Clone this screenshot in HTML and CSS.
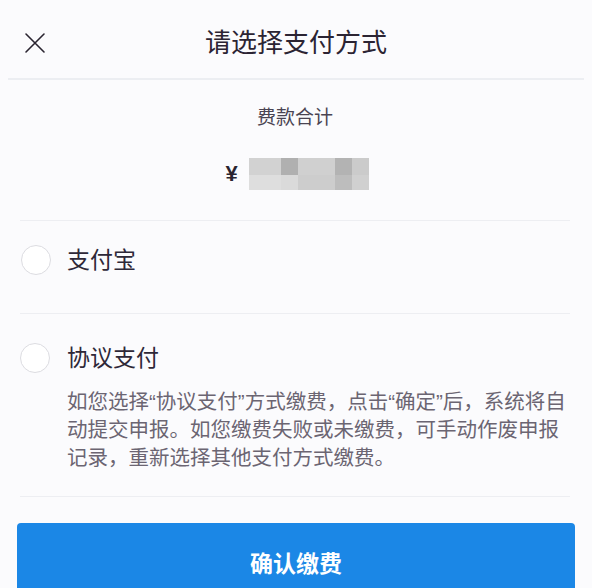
FILE: index.html
```html
<!DOCTYPE html>
<html lang="zh-CN">
<head>
    <meta charset="UTF-8">
    <meta name="viewport" content="width=device-width, initial-scale=1.0">
    <title>请选择支付方式</title>
    <link rel="stylesheet" href="styles.css">
</head>
<body>
    <div class="sheet">
        <div class="sheet-header">
            <button class="close-btn" aria-label="关闭">
                <svg width="22" height="22" viewBox="0 0 22 22">
                    <path d="M2 2 L20 20 M20 2 L2 20" stroke="#2a2430" stroke-width="1.6" fill="none" stroke-linecap="round"/>
                </svg>
            </button>
            <h1 class="sheet-title">请选择支付方式</h1>
        </div>

        <div class="content">
            <div class="amount">
                <div class="amount-label">费款合计</div>
                <div class="amount-value">
                    <span class="currency">¥</span>
                    <!-- amount is masked -->
                    <div class="mosaic">
                        <span class="cell c1"></span>
                        <span class="cell c2"></span>
                        <span class="cell c3"></span>
                        <span class="cell c4"></span>
                        <span class="cell c5"></span>
                        <span class="cell c6"></span>
                        <span class="cell c7"></span>
                        <span class="cell c8"></span>
                        <span class="cell c9"></span>
                        <span class="cell c10"></span>
                    </div>
                </div>
            </div>

            <label class="option option-first">
                <span class="radio"></span>
                <span class="option-name">支付宝</span>
            </label>

            <label class="option option-second">
                <div class="option-head">
                    <span class="radio"></span>
                    <span class="option-name">协议支付</span>
                </div>
                <p class="option-desc">如您选择“协议支付”方式缴费，点击“确定”后，系统将自动提交申报。如您缴费失败或未缴费，可手动作废申报记录，重新选择其他支付方式缴费。</p>
            </label>
        </div>

        <button class="confirm-btn">确认缴费</button>
    </div>
</body>
</html>
```

FILE: styles.css
```css
body {
    margin: 0;
    padding: 0;
    background-color: #fbfbfd;
    font-family: "Liberation Sans", "Noto Sans CJK SC", sans-serif;
    color: #2a2430;
    overflow: hidden;
}

.sheet {
    width: 592px;
    height: 588px;
    overflow: hidden;
}

.sheet-header {
    position: relative;
    height: 80px;
    padding-top: 8px;
    box-sizing: border-box;
    display: flex;
    align-items: center;
    justify-content: center;
    margin: 0 8px;
    border-bottom: 2px solid #eceef2;
}

.close-btn {
    position: absolute;
    left: 16px;
    top: 32px;
    padding: 0;
    border: none;
    background: none;
    width: 22px;
    height: 22px;
    cursor: pointer;
}

.close-btn svg {
    display: block;
}

.sheet-title {
    margin: 0;
    font-size: 26px;
    font-weight: normal;
    line-height: 30px;
    color: #2b2433;
}

.content {
    margin: 0 22px 0 20px;
}

.amount {
    padding: 25px 0 30px;
    border-bottom: 1px solid #edeef2;
    display: flex;
    flex-direction: column;
    align-items: center;
}

.amount-label {
    font-size: 19px;
    line-height: 26px;
    color: #4a4452;
}

.amount-value {
    margin-top: 27px;
    display: flex;
    align-items: center;
    gap: 11px;
    margin-left: 4px;
}

.currency {
    font-size: 22px;
    font-weight: 600;
    color: #2a2430;
    line-height: 32px;
}

.mosaic {
    display: grid;
    grid-template-columns: 32px 17px 37px 17px 17px;
    grid-template-rows: 17px 15px;
}

.c1 { background-color: #d2d2d2; }
.c2 { background-color: #b0b0b0; }
.c3 { background-color: #d0d0d0; }
.c4 { background-color: #b3b3b3; }
.c5 { background-color: #cbcbcb; }
.c6 { background-color: #dedede; }
.c7 { background-color: #dadada; }
.c8 { background-color: #cdcdcd; }
.c9 { background-color: #bdbdbd; }
.c10 { background-color: #d0d0d0; }

.option {
    display: block;
    border-bottom: 1px solid #edeef2;
    cursor: pointer;
}

.option-first {
    display: flex;
    align-items: center;
    gap: 16px;
    padding: 24px 0 38px 1px;
}

.option-second {
    padding: 29px 0 24px 0;
}

.option-head {
    display: flex;
    align-items: center;
    gap: 17px;
}

.radio {
    width: 30px;
    height: 30px;
    box-sizing: border-box;
    border: 1px solid #dcdce1;
    border-radius: 50%;
    background-color: #fff;
    flex-shrink: 0;
}

.option-name {
    font-size: 23px;
    line-height: 30px;
    color: #2e2838;
}

.option-desc {
    margin: 15px 0 0 47px;
    width: 504px;
    font-size: 20.5px;
    line-height: 28px;
    color: #6b6572;
}

.confirm-btn {
    display: block;
    width: 558px;
    height: 78px;
    margin: 26px 17px 0;
    border: none;
    border-radius: 4px;
    background-color: #1b87e6;
    color: #fff;
    font-family: "Liberation Sans", "Noto Sans CJK SC", sans-serif;
    font-size: 23px;
    font-weight: bold;
    cursor: pointer;
}
```
